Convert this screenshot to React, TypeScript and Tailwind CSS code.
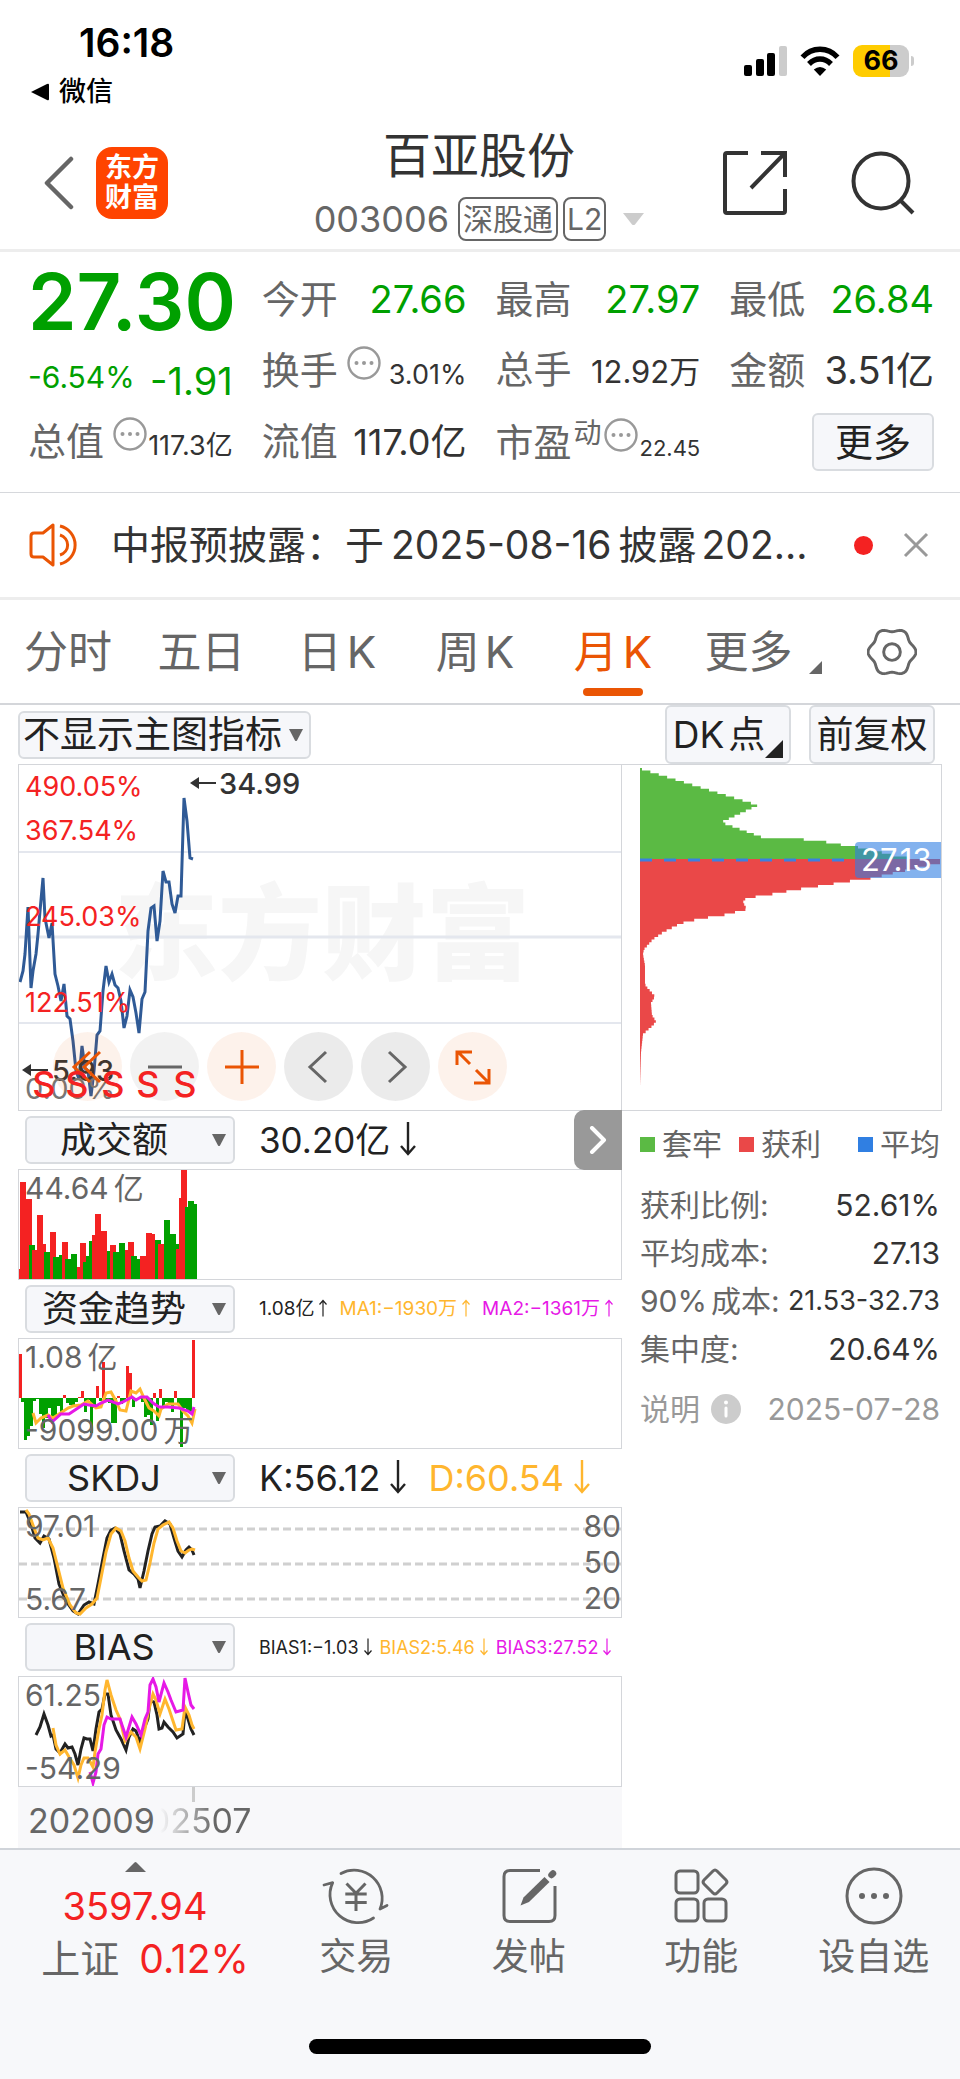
import React, { useState } from 'react';

const RED = '#f42222';
const GREEN = '#00a000';
const YELLOW = '#ffb62e';
const MAGENTA = '#e619e6';
const INK = '#222222';

type Bar = { x: number; h: number; up: boolean };

const r = (x: number, h: number): Bar => ({ x, h, up: true });
const g = (x: number, h: number): Bar => ({ x, h, up: false });

const PRICE_LINE =
  '1,217 4,206 6,189 9,142 12,223 14,206 17,189 19,169 21,146 24,113 26,153 30,173 33,158 36,209 39,221 42,236 45,219 48,251 51,254 54,276 57,306 60,314 63,281 66,303 69,306 72,331 75,306 78,270 81,266 84,226 87,201 90,217 93,209 96,220 99,223 102,236 105,263 108,251 111,225 114,232 117,248 120,268 123,234 126,227 129,166 132,143 135,141 138,176 141,156 144,106 147,117 150,117 153,139 156,148 159,131 162,131 165,33 168,56 171,93 174,94';

const VOLUME: Bar[] = [
  r(1, 10), r(2, 97), r(8, 80), g(11, 34), r(14, 29), r(19, 64), r(22, 35), g(26, 27), r(32, 47), g(35, 22),
  g(41, 24), r(44, 37), g(47, 20), g(53, 25), r(59, 12), r(62, 36), g(65, 17), g(68, 23), g(71, 38), r(74, 44),
  r(77, 65), r(80, 32), r(83, 48), g(89, 28), r(92, 34), g(95, 27), g(101, 36), r(107, 29), r(110, 37), g(113, 23),
  g(116, 20), r(122, 23), r(128, 46), r(131, 45), g(137, 39), r(140, 35), g(146, 59), g(152, 45), g(155, 35), r(158, 30),
  r(161, 81), r(163, 109), g(167, 72), g(170, 78), g(173, 75),
];

const FLOW: Bar[] = [
  r(1, 44), g(3, 4), g(6, 42), g(9, 38), g(12, 28), g(15, 3), g(18, 1), g(21, 16), g(24, 30), g(27, 20),
  g(30, 10), g(33, 22), g(36, 18), g(39, 8), g(42, 14), r(45, 3), g(48, 5), g(51, 7), g(54, 8), g(57, 4),
  r(60, 1), r(63, 7), g(66, 14), g(69, 2), g(72, 35), g(75, 10), r(78, 12), g(81, 3), r(84, 36), g(87, 4),
  g(90, 5), g(93, 25), g(96, 25), r(99, 2), g(102, 6), g(105, 3), r(108, 32), r(111, 25), g(114, 9), g(117, 2),
  g(120, 1), g(123, 4), g(126, 19), g(129, 17), g(132, 27), r(135, 5), g(138, 23), r(141, 9), g(144, 10), g(147, 4),
  g(150, 5), g(153, 14), r(156, 7), g(159, 6), g(162, 49), g(165, 10), g(168, 12), g(171, 14), r(174, 58),
];

// [y, width] samples of the cost distribution
const TRAPPED = [
  [3, 2], [39, 118], [56, 81], [71, 122], [73, 162], [76, 188], [79, 204], [81, 218], [84, 233], [89, 253], [92, 273], [94, 282],
];
const PROFIT = [
  [94, 300], [97, 300], [101, 282], [106, 257], [110, 240], [113, 227], [114, 215], [117, 196], [120, 178], [122, 165],
  [124, 152], [127, 138], [129, 124], [132, 106], [136, 103], [143, 107], [146, 95], [148, 89], [150, 74], [153, 59],
  [155, 47], [159, 37], [166, 23], [173, 13], [183, 4], [188, 3], [199, 5], [218, 5], [221, 7], [230, 15], [237, 11],
  [249, 12], [255, 16], [259, 13], [268, 3], [286, 1], [320, 0],
];

function stepPath(samples: number[][]) {
  const start = samples[0][0];
  const end = samples[samples.length - 1][0];
  let d = `M18 ${start}`;
  for (let y = start; y < end; y += 2.6) {
    const i = Math.max(1, samples.findIndex((s) => s[0] > y));
    const [y0, w0] = samples[i - 1];
    const [y1, w1] = samples[i];
    const w = w0 + ((w1 - w0) * (y - y0)) / (y1 - y0);
    d += `H${18 + w}V${Math.min(y + 2.6, end)}`;
  }
  return d + 'H18Z';
}

// six-lobed outline of the settings gear
const GEAR = Array.from({ length: 72 }, (_, i) => {
  const a = (i * Math.PI) / 36;
  const radius = 21.2 + 1.8 * Math.cos(6 * a);
  return `${(24 + radius * Math.cos(a)).toFixed(1)},${(24 + radius * Math.sin(a)).toFixed(1)}`;
}).join(' ');

function DownTriangle({ className }: { className: string }) {
  return (
    <svg className={className} viewBox="0 0 14 12" preserveAspectRatio="none" aria-hidden="true">
      <path d="M0 0H14L8 11.4Q7 12.6 6 11.4Z" fill="currentColor" />
    </svg>
  );
}

function MoreDots() {
  return (
    <svg className="size-[34px] shrink-0 text-[#999]" viewBox="0 0 34 34" fill="none" aria-hidden="true">
      <circle cx="17" cy="17" r="15.5" stroke="currentColor" strokeWidth="2.4" />
      <circle cx="9.5" cy="17" r="2" fill="currentColor" />
      <circle cx="17" cy="17" r="2" fill="currentColor" />
      <circle cx="24.5" cy="17" r="2" fill="currentColor" />
    </svg>
  );
}

function StatusBar() {
  return (
    <div className="flex items-start justify-between pt-5 pr-[46px] pl-[30px] text-black">
      <div>
        <div className="pl-[49px] text-[39px] leading-[46px] font-semibold">16:18</div>
        <a href="#wechat" className="mt-2 flex items-center gap-[9px] text-[27px] leading-[36px] font-medium">
          <svg className="h-[18px] w-5" viewBox="0 0 20 18" aria-hidden="true">
            <path d="M1 9L17 1Q19 0 19 2V16Q19 18 17 17Z" />
          </svg>
          微信
        </a>
      </div>
      <div className="mt-[25px] flex items-center gap-[13px]">
        <svg className="h-[30px] w-[43px]" viewBox="0 0 43 30" aria-hidden="true">
          <rect x="0" y="19" width="8" height="11" rx="2" />
          <rect x="12" y="13" width="8" height="17" rx="2" />
          <rect x="23" y="7" width="8" height="23" rx="2" />
          <rect x="35" y="0" width="8" height="30" rx="2" fill="#ccc" />
        </svg>
        <svg className="h-[30px] w-10" viewBox="0 0 40 30" fill="none" stroke="black" strokeWidth="5.4" aria-hidden="true">
          <path d="M2.5 11.2C12 .6 28 .6 37.5 11.2" />
          <path d="M9 18C15.5 11.4 24.5 11.4 31 18" />
          <path d="M20 30L13.8 23.6Q20 18.4 26.2 23.6Z" fill="black" stroke="none" />
        </svg>
        <div className="flex items-center gap-[2px]">
          <div className="h-8 w-14 rounded-[9px] bg-[linear-gradient(90deg,#ffcc00_66%,#cccccc_66%)] text-center text-[27px] leading-8 font-bold">
            66
          </div>
          <div className="h-[10px] w-[3px] rounded-r-sm bg-[#ccc]" />
        </div>
      </div>
    </div>
  );
}

function Header() {
  return (
    <header className="flex h-[142px] items-center border-b-3 border-[#ededed] pt-[6px] pr-[45px] pl-[43px]">
      <div className="flex w-[268px] items-center gap-[21px]">
        <button aria-label="返回" className="text-[#666]">
          <svg className="h-[54px] w-8" viewBox="0 0 32 54" fill="none" stroke="currentColor" strokeWidth="4.5" strokeLinecap="round" strokeLinejoin="round">
            <path d="M28 3L4 27L28 51" />
          </svg>
        </button>
        <div className="grid size-18 place-content-center rounded-2xl bg-[#ff4400] text-center text-[27px] leading-[30px] font-bold text-white">
          <span>东方</span>
          <span>财富</span>
        </div>
      </div>
      <div className="flex flex-1 flex-col items-center pt-1">
        <h1 className="text-[48px] leading-[56px] text-[#333]">百亚股份</h1>
        <button className="mt-[13px] flex items-center gap-[5px] text-[#666]">
          <span className="mr-1 text-[36px] leading-[44px]">003006</span>
          <span className="rounded-lg border-2 border-[#666] px-[3px] text-[30px] leading-[40px]">深股通</span>
          <span className="rounded-lg border-2 border-[#666] px-[2px] text-[30px] leading-[40px]">L2</span>
          <DownTriangle className="ml-3 h-3 w-[21px] text-[#ccc]" />
        </button>
      </div>
      <div className="flex w-[268px] items-center justify-end gap-[63px] text-[#333]">
        <button aria-label="分享">
          <svg className="size-[66px]" viewBox="0 0 66 66" fill="none" stroke="currentColor" strokeWidth="4">
            <path d="M26 3H5Q3 3 3 5V61Q3 63 5 63H61Q63 63 63 61V39" />
            <path d="M39 3H63V27M63 3L29 38" />
          </svg>
        </button>
        <button aria-label="搜索">
          <svg className="size-[64px]" viewBox="0 0 64 64" fill="none" stroke="currentColor" strokeWidth="4">
            <circle cx="30" cy="30" r="27.5" />
            <path d="M49 49L62 62" />
          </svg>
        </button>
      </div>
    </header>
  );
}

type StatProps = { label: string; children: React.ReactNode; more?: boolean; sup?: string };

function Stat({ label, children, more, sup }: StatProps) {
  return (
    <div className="flex items-baseline justify-between whitespace-nowrap">
      <span className="flex text-[38px] leading-[48px] text-[#666]">
        {label}
        {sup && <sup className="top-0 pl-[2px] text-[28px] leading-[30px]">{sup}</sup>}
        {more && (
          <span className={sup ? 'pl-[2px]' : 'pl-[9px]'}>
            <MoreDots />
          </span>
        )}
      </span>
      {children}
    </div>
  );
}

function Quote() {
  return (
    <section className="grid grid-cols-4 auto-rows-[71px] items-center gap-x-[29px] border-b border-[#d6d8dc] pt-3 pr-[26px] pb-[15px] pl-7 text-[#333]">
      <div className="pt-1 text-[78px] leading-[72px] font-semibold text-[#00a000]">27.30</div>
      <Stat label="今开"><span className="text-[38px] text-[#00a000]">27.66</span></Stat>
      <Stat label="最高"><span className="text-[38px] text-[#00a000]">27.97</span></Stat>
      <Stat label="最低"><span className="text-[38px] text-[#00a000]">26.84</span></Stat>

      <div className="flex items-center justify-between pt-3 text-[#00a000]">
        <span className="text-[30px] leading-[36px]">-6.54%</span>
        <span className="pt-2 text-[38px] leading-[40px]">-1.91</span>
      </div>
      <Stat label="换手" more><span className="text-[27px]">3.01%</span></Stat>
      <Stat label="总手"><span className="text-[31px]">12.92万</span></Stat>
      <Stat label="金额"><span className="text-[38px]">3.51亿</span></Stat>

      <Stat label="总值" more><span className="text-[27px]">117.3亿</span></Stat>
      <Stat label="流值"><span className="text-[36px]">117.0亿</span></Stat>
      <Stat label="市盈" sup="动" more><span className="text-[22px]">22.45</span></Stat>
      <button className="justify-self-end rounded-md border-2 border-[#d9dce0] bg-[#f6f7fa] px-[21px] text-[38px] leading-[54px] text-[#222]">
        更多
      </button>
    </section>
  );
}

function Notice() {
  return (
    <section className="flex h-[107px] items-center border-b-3 border-[#ededed] pr-[30px] pl-7">
      <svg className="h-11 w-[54px] shrink-0" viewBox="0 0 54 44" fill="none" stroke="#ea5504" strokeWidth="3" strokeLinejoin="round" aria-hidden="true">
        <path d="M25 2V42L15 34H6Q3 34 3 31V13Q3 10 6 10H15Z" />
        <path d="M32 12A11 10.5 0 0 1 32 32M32 3A19.5 19.5 0 0 1 32 41" />
      </svg>
      <a href="#notice" className="ml-[29px] min-w-0 flex-1 truncate text-[39px] leading-[50px] text-[#333]">
        中报预披露：于<span className="px-[7px]">2025-08-16</span>披露<span className="pl-[5px]">202...</span>
      </a>
      <span className="mr-[29px] ml-5 size-[19px] rounded-full bg-[#f42222]" />
      <button aria-label="关闭">
        <svg className="size-7" viewBox="0 0 28 28" stroke="#999" strokeWidth="3">
          <path d="M3 3L25 25M25 3L3 25" />
        </svg>
      </button>
    </section>
  );
}

const TABS = [
  { name: '分时' },
  { name: '五日' },
  { name: '日', suffix: 'K' },
  { name: '周', suffix: 'K' },
  { name: '月', suffix: 'K' },
];

function PeriodTabs() {
  const [active, setActive] = useState('月');
  return (
    <nav className="flex h-[105px] items-center justify-between border-b-2 border-[#d4d6da] pr-[43px] pl-6 text-[44px] leading-[56px] text-[#666]">
      {TABS.map((tab) => (
        <button
          key={tab.name}
          onClick={() => setActive(tab.name)}
          className={`relative ${tab.suffix ? 'px-[7px]' : ''} ${tab.name === active ? 'text-[#ea5504]' : ''}`}
        >
          {tab.name}
          {tab.suffix && <span className="ml-[5px]">{tab.suffix}</span>}
          {tab.name === active && <span className="absolute -bottom-4 left-1/2 h-2 w-[60px] -translate-x-1/2 rounded-sm bg-[#ea5504]" />}
        </button>
      ))}
      <button className="flex items-end gap-4">
        更多
        <svg className="mb-[6px] size-[13px]" viewBox="0 0 13 13" fill="currentColor" aria-hidden="true">
          <path d="M13 0V13H0Z" />
        </svg>
      </button>
      <button aria-label="设置">
        <svg className="size-[50px]" viewBox="0 0 48 48" fill="none" stroke="currentColor" strokeWidth="2.8" strokeLinejoin="round">
          <polygon points={GEAR} />
          <circle cx="24" cy="24" r="8" />
        </svg>
      </button>
    </nav>
  );
}

function ChartToolbar() {
  return (
    <div className="flex h-[59px] items-center pr-[25px] pl-[18px] text-[37px] whitespace-nowrap text-[#222]">
      <button className="flex h-12 items-center gap-[7px] rounded-md border-2 border-[#d9dce0] bg-[#f6f7fa] pr-[6px] pl-[3px]">
        不显示主图指标
        <DownTriangle className="h-3 w-[14px] text-[#666]" />
      </button>
      <button className="relative ml-auto h-[59px] w-[126px] rounded-md border-2 border-[#d9dce0] bg-[#f6f7fa] pr-[18px]">
        DK<span className="ml-1">点</span>
        <svg className="absolute right-[6px] bottom-1 size-[18px]" viewBox="0 0 18 18" aria-hidden="true">
          <path d="M18 0V18H0Z" fill="#222" />
        </svg>
      </button>
      <button className="ml-[18px] h-[59px] w-[126px] rounded-md border-2 border-[#d9dce0] bg-[#f6f7fa]">前复权</button>
    </div>
  );
}

const TOOL = 'grid size-[69px] place-content-center rounded-full';
const ORANGE = `${TOOL} bg-[#ea5504]/8 text-[#ea5504]`;
const LIGHT = `${TOOL} bg-black/5 text-[#666]`;
const DARK = `${TOOL} bg-black/8 text-[#666]`;

function ToolIcon({ d }: { d: string }) {
  return (
    <svg className="size-9" viewBox="0 0 36 36" fill="none" stroke="currentColor" strokeWidth="3">
      <path d={d} />
    </svg>
  );
}

function MainChart() {
  return (
    <div className="relative h-[347px] border border-[#d4d6da]">
      <div className="absolute top-[104px] left-[95px] text-[104px] leading-[130px] font-black whitespace-nowrap text-[#f6f6f6]" aria-hidden="true">
        东方财富
      </div>
      <svg className="absolute inset-0 h-full w-full" role="img" aria-label="月K走势">
        <line x1="0" x2="100%" y1="87" y2="87" stroke="#e4e7ee" strokeWidth="2" />
        <line x1="0" x2="100%" y1="172" y2="172" stroke="#e4e7ee" strokeWidth="3" />
        <line x1="0" x2="100%" y1="258" y2="258" stroke="#e4e7ee" strokeWidth="2" />
        <polyline points={PRICE_LINE} fill="none" stroke="#2f5a96" strokeWidth="3" />
        <g fill={RED} fontSize="27">
          <text x="6" y="31">490.05%</text>
          <text x="6" y="75">367.54%</text>
          <text x="6" y="161">245.03%</text>
          <text x="6" y="247">122.51%</text>
        </g>
        <g fill="#333" fontSize="29" fontWeight="500">
          <text x="200" y="29">34.99</text>
          <path d="M171 18L180 12V24Z" />
          <rect x="179" y="17" width="18" height="2" />
          <text x="33" y="316">5.93</text>
          <path d="M3 305L12 299V311Z" />
          <rect x="11" y="304" width="18" height="2" />
        </g>
        <text x="6" y="334" fill="#777" fontSize="29">0.00%</text>
      </svg>
      <div className="absolute bottom-[9px] left-[34px] flex gap-2">
        <button className={ORANGE} aria-label="最早"><ToolIcon d="M20 3L4 18L20 33M30 3L14 18L30 33" /></button>
        <button className={LIGHT} aria-label="缩小"><ToolIcon d="M1 18H35" /></button>
        <button className={ORANGE} aria-label="放大"><ToolIcon d="M1 18H35M18 1V35" /></button>
        <button className={DARK} aria-label="左移"><ToolIcon d="M25 3L9 18L25 33" /></button>
        <button className={DARK} aria-label="右移"><ToolIcon d="M11 3L27 18L11 33" /></button>
        <button className={ORANGE} aria-label="全屏"><ToolIcon d="M2 16V3H17M3 3L15 15M21 21L33 33M34 20V34H19" /></button>
      </div>
      <svg className="pointer-events-none absolute inset-0 h-full w-full" aria-hidden="true">
        <g fill={RED} fontSize="36" fontWeight="500" textAnchor="middle">
          {[25, 58, 94, 129, 166].map((x) => (
            <text key={x} x={x} y="332">S</text>
          ))}
        </g>
      </svg>
    </div>
  );
}

type IndicatorProps = { name: string; readout: React.ReactNode; children: React.ReactNode };

function Indicator({ name, readout, children }: IndicatorProps) {
  return (
    <section>
      <div className="flex h-[58px] items-center pl-[7px]">
        <label className="relative block">
          <select
            aria-label={`指标 ${name}`}
            defaultValue={name}
            className="block h-12 w-[210px] appearance-none rounded-md border-2 border-[#d9dce0] bg-[#f6f7fa] pr-[36px] pl-1 text-[36px] leading-[42px] text-[#222] [text-align-last:center]"
          >
            <option>{name}</option>
          </select>
          <DownTriangle className="pointer-events-none absolute top-[18px] right-[9px] h-3 w-[14px] text-[#666]" />
        </label>
        <div className="ml-[24px] whitespace-nowrap text-[#222]">{readout}</div>
      </div>
      <svg className="block h-[111px] w-full border border-[#d4d6da] text-[30px]">{children}</svg>
    </section>
  );
}

function Arrow({ up, small }: { up?: boolean; small?: boolean }) {
  return (
    <svg
      className={small ? 'ml-[5px] inline-block h-[18px] w-2 align-[-2px]' : 'ml-[10px] inline-block h-[34px] w-4 align-[-3px]'}
      viewBox="0 0 16 34"
      fill="none"
      stroke="currentColor"
      strokeWidth="2.4"
      aria-hidden="true"
    >
      <path d={up ? 'M8 34V2M1 10L8 2L15 10' : 'M8 0V32M1 24L8 32L15 24'} />
    </svg>
  );
}

function VolumeChart() {
  return (
    <Indicator name="成交额" readout={<span className="text-[35px]">30.20亿<Arrow /></span>}>
      {VOLUME.map((b, i) => (
        <rect key={i} x={b.x - 1} y={109 - b.h} width="6" height={b.h} fill={b.up ? RED : GREEN} />
      ))}
      <text x="6" y="29" fill="#666">44.64<tspan dx="5">亿</tspan></text>
    </Indicator>
  );
}

function FlowChart() {
  return (
    <Indicator
      name="资金趋势"
      readout={
        <span className="flex gap-[12px] text-[19px]">
          <span>1.08亿<Arrow up small /></span>
          <span className="text-[#ffb62e]">MA1:−1930万<Arrow up small /></span>
          <span className="text-[#e619e6]">MA2:−1361万<Arrow up small /></span>
        </span>
      }
    >
      {FLOW.map((b) => (
        <rect key={b.x} x={b.x - 1} y={b.up ? 59 - b.h : 59} width="3" height={b.h} fill={b.up ? RED : GREEN} />
      ))}
      <polyline fill="none" stroke={YELLOW} strokeWidth="3" points="14,74 17,84 22,79 29,76 34,79 40,75 49,69 54,67 62,66 69,62 77,69 82,68 87,54 92,53 97,62 101,71 107,72 112,52 117,54 121,50 125,59 130,69 135,72 140,77 142,70 149,65 159,65 164,72 169,77 173,84 176,70" />
      <polyline fill="none" stroke={MAGENTA} strokeWidth="3" points="29,76 33,83 42,75 50,75 59,69 65,65 70,66 77,67 82,64 89,61 99,65 104,63 113,58 117,61 122,58 128,58 134,64 140,68 149,68 160,69 169,72 173,75 175,68" />
      <g fill="#666">
        <text x="6" y="29">1.08<tspan dx="5">亿</tspan></text>
        <text x="6" y="102">-9099.00<tspan dx="5">万</tspan></text>
      </g>
    </Indicator>
  );
}

function SkdjChart() {
  return (
    <Indicator
      name="SKDJ"
      readout={
        <span className="flex gap-[22px] text-[36px]">
          <span>K:56.12<Arrow /></span>
          <span className="text-[#ffb62e]">D:60.54<Arrow /></span>
        </span>
      }
    >
      {[21, 56, 91].map((y) => (
        <line key={y} x1="0" x2="100%" y1={y} y2={y} stroke="#d0d0d0" strokeWidth="3" strokeDasharray="8 4" />
      ))}
      <polyline fill="none" stroke={INK} strokeWidth="3" points="1,4 7,4 12,16 16,30 21,35 25,28 30,31 35,50 40,76 47,93 54,103 59,106 65,97 70,94 75,96 79,76 84,50 88,30 92,22 96,20 101,26 105,43 110,62 115,66 119,71 121,80 125,63 129,43 133,26 136,19 141,18 146,13 151,16 155,30 159,43 163,49 167,42 170,39 173,42 175,47" />
      <polyline fill="none" stroke={YELLOW} strokeWidth="3" points="7,2 10,6 15,20 19,30 24,32 29,30 34,40 39,60 44,80 51,97 57,105 61,106 67,100 73,96 78,90 82,70 87,44 92,26 97,20 102,23 106,33 110,50 114,63 119,69 123,73 127,72 131,55 135,35 139,21 144,17 150,14 154,20 158,33 162,43 166,45 170,42 173,41 176,42" />
      <g fill="#666">
        <text x="6" y="29">97.01</text>
        <text x="6" y="102">5.67</text>
        <text x="100%" y="29" textAnchor="end">80</text>
        <text x="100%" y="65" textAnchor="end">50</text>
        <text x="100%" y="101" textAnchor="end">20</text>
      </g>
    </Indicator>
  );
}

function BiasChart() {
  return (
    <Indicator
      name="BIAS"
      readout={
        <span className="flex gap-2 text-[18px]">
          <span>BIAS1:−1.03<Arrow small /></span>
          <span className="text-[#ffb62e]">BIAS2:5.46<Arrow small /></span>
          <span className="text-[#e619e6]">BIAS3:27.52<Arrow small /></span>
        </span>
      }
    >
      <polyline fill="none" stroke={INK} strokeWidth="3" points="17,58 21,50 25,37 29,48 32,59 34,58 37,72 41,76 46,67 49,71 53,70 56,77 59,88 62,72 65,61 68,62 71,62 74,74 77,52 80,35 83,32 86,17 89,17 92,38 97,53 102,62 107,73 110,60 114,52 117,54 121,65 125,52 129,42 131,24 135,25 138,38 140,52 143,51 145,45 149,50 154,55 158,61 164,57 166,34 169,42 172,52 175,58" />
      <polyline fill="none" stroke={YELLOW} strokeWidth="3" points="34,51 37,68 41,77 46,73 50,80 55,88 59,101 62,88 65,81 69,81 74,90 76,75 80,52 83,38 86,13 88,3 92,18 97,33 101,42 106,64 112,55 117,60 121,72 126,52 130,32 134,17 137,23 141,37 146,22 150,32 157,53 163,52 166,30 170,38 173,48 175,52" />
      <polyline fill="none" stroke={MAGENTA} strokeWidth="3" points="71,95 74,106 77,95 79,77 82,72 85,48 88,40 92,42 97,42 101,42 107,60 113,40 117,47 122,58 126,42 129,35 131,8 134,2 137,10 140,25 145,6 149,15 152,23 157,35 164,33 166,1 169,15 172,28 175,32" />
      <g fill="#666">
        <text x="6" y="29">61.25</text>
        <text x="6" y="102">-54.29</text>
      </g>
    </Indicator>
  );
}

function TimeAxis() {
  return (
    <div className="relative h-[61px] bg-[#f8f8fa] text-[34px] leading-[68px] text-[#666]">
      <span className="ml-[10px]">202009</span>
      <span className="absolute top-0 left-[110px] bg-[linear-gradient(90deg,transparent_26%,#666_70%)] bg-clip-text text-transparent">202507</span>
      <span className="absolute top-0 left-[174px] h-[15px] w-[3px] bg-[#ccc]" />
    </div>
  );
}

type CostRowProps = { label: React.ReactNode; value: string; small?: boolean };

function CostRow({ label, value, small }: CostRowProps) {
  return (
    <div className="flex items-center justify-between leading-[48px] whitespace-nowrap text-[#333]">
      <dt className="text-[#666]">{label}</dt>
      <dd className={small ? 'text-[27px]' : 'text-[30px]'}>{value}</dd>
    </div>
  );
}

function Legend({ swatch, name }: { swatch: string; name: string }) {
  return (
    <span className="flex items-center gap-[7px]">
      <span className={`size-[15px] ${swatch}`} />
      {name}
    </span>
  );
}

function CostPanel() {
  return (
    <aside className="w-[320px] shrink-0 text-[30px]">
      <svg className="block h-[347px] w-full border-y border-r border-[#d4d6da]" role="img" aria-label="筹码分布">
        <path d={stepPath(TRAPPED)} fill="#5bba44" />
        <path d={stepPath(PROFIT)} fill="#ea4848" />
        <line x1="18" x2="222" y1="95" y2="95" stroke="#3b80e0" strokeWidth="3" strokeDasharray="12 12" />
        <rect x="233" y="77" width="92" height="36" rx="4" fill="#307fe2" fillOpacity="0.6" />
        <text x="239" y="106" fill="white" fontSize="31">27.13</text>
      </svg>
      <div className="pr-[2px] pl-[18px]">
        <div className="flex h-[70px] items-center pb-1 text-[#666]">
          <Legend swatch="bg-[#5bba44]" name="套牢" />
          <span className="ml-[17px]">
            <Legend swatch="bg-[#ea4848]" name="获利" />
          </span>
          <span className="ml-auto">
            <Legend swatch="bg-[#307fe2]" name="平均" />
          </span>
        </div>
        <dl>
          <CostRow label="获利比例:" value="52.61%" />
          <CostRow label="平均成本:" value="27.13" />
          <CostRow label={<>90%<span className="ml-1">成本:</span></>} value="21.53-32.73" small />
          <CostRow label="集中度:" value="20.64%" />
        </dl>
        <div className="mt-3 flex items-center leading-[48px] text-[#999]">
          说明
          <svg className="ml-[11px] size-[30px]" viewBox="0 0 30 30" aria-hidden="true">
            <circle cx="15" cy="15" r="15" fill="#ccc" />
            <circle cx="15" cy="8.5" r="2" fill="white" />
            <rect x="13.5" y="12.5" width="3" height="11" rx="1.5" fill="white" />
          </svg>
          <span className="ml-auto">2025-07-28</span>
        </div>
      </div>
    </aside>
  );
}

function NavItem({ label, children }: { label: string; children: React.ReactNode }) {
  return (
    <button className="flex flex-1 flex-col items-center">
      <svg className="h-[60px] w-[68px]" viewBox="0 0 68 60" fill="none" stroke="currentColor" strokeWidth="3" strokeLinecap="round" strokeLinejoin="round" aria-hidden="true">
        {children}
      </svg>
      <span className="mt-[9px] text-[37px] leading-[44px]">{label}</span>
    </button>
  );
}

function BottomBar() {
  return (
    <footer className="border-t-2 border-[#d0d4da] bg-[#f7f8fa] pb-7 text-[#666]">
      <nav className="flex items-start pt-4">
        <button className="flex w-[270px] flex-col items-center">
          <svg className="-mt-1 h-[10px] w-[21px]" viewBox="0 0 21 10" fill="currentColor" aria-hidden="true">
            <path d="M0 10L9.5 .5Q10.5 -.3 11.5 .5L21 10Z" />
          </svg>
          <span className="mt-3 text-[38px] leading-[44px] text-[#f42222]">3597.94</span>
          <span className="mt-[7px] flex items-center gap-5 pl-5 text-[39px] leading-[48px]">
            上证 <span className="text-[#f42222]">0.12%</span>
          </span>
        </button>
        <NavItem label="交易">
          <path d="M19 7.5A28 28 0 0 1 58 43L65 39.5M51.5 52A28 28 0 0 1 10.7 16.7L2 19" strokeWidth="2.8" />
          <path d="M24.5 17.5L34 27.3L43.5 17.5M34 26V45M23.3 28H44.7M23.3 36.5H44.7" strokeLinecap="butt" />
        </NavItem>
        <NavItem label="发帖">
          <path d="M45 4.5H15Q9 4.5 9 10.5V49.5Q9 55.5 15 55.5H54Q60 55.5 60 49.5V20" strokeLinecap="butt" />
          <path d="M25.5 39.5L28.5 31.5L49.5 11L54.5 16L34 36Z" fill="currentColor" stroke="none" />
          <path d="M56.5 9L58 7.5" strokeWidth="6.5" />
        </NavItem>
        <NavItem label="功能">
          <rect x="9" y="5" width="22" height="22" rx="4" />
          <rect x="9" y="33" width="22" height="22" rx="4" />
          <rect x="37" y="33" width="22" height="22" rx="4" />
          <path d="M46 5Q48 3 50 5L59 14Q61 16 59 18L50 27Q48 29 46 27L37 18Q35 16 37 14Z" />
        </NavItem>
        <NavItem label="设自选">
          <circle cx="34" cy="30" r="27" />
          <g fill="currentColor" stroke="none">
            <circle cx="22" cy="30" r="3" />
            <circle cx="34" cy="30" r="3" />
            <circle cx="46" cy="30" r="3" />
          </g>
        </NavItem>
      </nav>
      <div className="mx-auto mt-14 h-[15px] w-[342px] rounded-full bg-black" />
    </footer>
  );
}

export default function App() {
  return (
    <div className="min-h-screen bg-white font-['Inter','Noto_Sans_CJK_SC',sans-serif]">
      <StatusBar />
      <Header />
      <Quote />
      <Notice />
      <PeriodTabs />
      <ChartToolbar />
      <main className="flex pr-[18px] pl-[18px]">
        <div className="relative min-w-0 flex-1">
          <MainChart />
          <VolumeChart />
          <FlowChart />
          <SkdjChart />
          <BiasChart />
          <TimeAxis />
          <button aria-label="收起筹码" className="absolute top-[346px] right-0 grid h-[60px] w-12 place-content-center rounded-l-[10px] bg-[#999]">
            <svg className="h-7 w-[18px]" viewBox="0 0 18 28" fill="none" stroke="white" strokeWidth="4" strokeLinecap="round" strokeLinejoin="round">
              <path d="M3 2L15 14L3 26" />
            </svg>
          </button>
        </div>
        <CostPanel />
      </main>
      <BottomBar />
    </div>
  );
}
